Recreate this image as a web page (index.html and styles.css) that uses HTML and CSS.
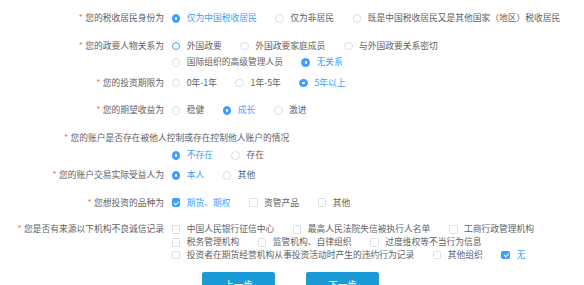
FILE: index.html
```html
<!DOCTYPE html>
<html lang="zh-CN">
<head>
<meta charset="utf-8">
<title>投资者信息</title>
<link rel="stylesheet" href="styles.css">
</head>
<body>
<div class="form">
  <div class="row">
    <div class="label"><span class="req">*</span>您的税收居民身份为</div>
    <div class="opts">
      <span class="opt on"><i class="radio"></i>仅为中国税收居民</span>
      <span class="opt"><i class="radio"></i>仅为非居民</span>
      <span class="opt"><i class="radio"></i>既是中国税收居民又是其他国家（地区）税收居民</span>
    </div>
  </div>

  <div class="row">
    <div class="label"><span class="req">*</span>您的政要人物关系为</div>
    <div class="opts wrap">
      <span class="opt hover"><i class="radio"></i>外国政要</span>
      <span class="opt"><i class="radio"></i>外国政要家庭成员</span>
      <span class="opt"><i class="radio"></i>与外国政要关系密切</span>
      <span class="opt"><i class="radio"></i>国际组织的高级管理人员</span>
      <span class="opt on"><i class="radio"></i>无关系</span>
    </div>
  </div>

  <div class="row close">
    <div class="label"><span class="req">*</span>您的投资期限为</div>
    <div class="opts">
      <span class="opt"><i class="radio"></i>0年-1年</span>
      <span class="opt"><i class="radio"></i>1年-5年</span>
      <span class="opt on"><i class="radio"></i>5年以上</span>
    </div>
  </div>

  <div class="row">
    <div class="label"><span class="req">*</span>您的期望收益为</div>
    <div class="opts">
      <span class="opt"><i class="radio"></i>稳健</span>
      <span class="opt on"><i class="radio"></i>成长</span>
      <span class="opt"><i class="radio"></i>激进</span>
    </div>
  </div>

  <div class="long-label"><span class="req">*</span>您的账户是否存在被他人控制或存在控制他人账户的情况</div>
  <div class="row under">
    <div class="label"></div>
    <div class="opts">
      <span class="opt on"><i class="radio"></i>不存在</span>
      <span class="opt"><i class="radio"></i>存在</span>
    </div>
  </div>

  <div class="row close">
    <div class="label"><span class="req">*</span>您的账户交易实际受益人为</div>
    <div class="opts">
      <span class="opt on"><i class="radio"></i>本人</span>
      <span class="opt"><i class="radio"></i>其他</span>
    </div>
  </div>

  <div class="row">
    <div class="label"><span class="req">*</span>您想投资的品种为</div>
    <div class="opts">
      <span class="opt on"><i class="check"></i>期货、期权</span>
      <span class="opt"><i class="check"></i>资管产品</span>
      <span class="opt"><i class="check"></i>其他</span>
    </div>
  </div>

  <div class="row dense">
    <div class="label"><span class="req">*</span>您是否有来源以下机构不良诚信记录</div>
    <div class="opts wrap">
      <span class="opt"><i class="check"></i>中国人民银行征信中心</span>
      <span class="opt"><i class="check"></i>最高人民法院失信被执行人名单</span>
      <span class="opt"><i class="check"></i>工商行政管理机构</span>
      <span class="opt"><i class="check"></i>税务管理机构</span>
      <span class="opt"><i class="check"></i>监管机构、自律组织</span>
      <span class="opt"><i class="check"></i>过度维权等不当行为信息</span>
      <span class="opt"><i class="check"></i>投资者在期货经营机构从事投资活动时产生的违约行为记录</span>
      <span class="opt"><i class="check"></i>其他组织</span>
      <span class="opt on"><i class="check"></i>无</span>
    </div>
  </div>

  <div class="actions">
    <button class="btn" type="button">上一步</button>
    <button class="btn" type="button">下一步</button>
  </div>
</div>
</body>
</html>
```

FILE: styles.css
```css
html, body {
  margin: 0;
  padding: 0;
  background: #ffffff;
  overflow: hidden;
}

body {
  font-family: "Noto Sans CJK SC", "Noto Sans", sans-serif;
  font-size: 8.75px;
  color: #606266;
}

.form {
  padding-top: 10.3px;
}

.row {
  display: grid;
  grid-template-columns: 171.6px 1fr;
  line-height: 16px;
  margin-top: 11.4px;
}

.row:first-child {
  margin-top: 0;
}

.row.close {
  margin-top: 4px;
}

.row.under {
  margin-top: 1.4px;
}

.row.dense {
  line-height: 12.7px;
  margin-top: 12.6px;
}

.label {
  text-align: right;
  padding-right: 7.6px;
  white-space: nowrap;
}

.req {
  color: #f56c6c;
  margin-right: 2.5px;
}

.long-label {
  line-height: 16px;
  margin-top: 11.6px;
  padding-left: 64px;
  white-space: nowrap;
}

.opts {
  display: flex;
  flex-wrap: wrap;
  align-items: center;
}

.opts.wrap .opt {
  line-height: inherit;
}

.row:not(.dense) .opts.wrap {
  line-height: 16.6px;
}

.opt {
  display: inline-flex;
  align-items: center;
  margin-right: 18.6px;
  white-space: nowrap;
}

.opt.on {
  color: #409eff;
}

.radio,
.check {
  display: inline-block;
  box-sizing: border-box;
  width: 8.75px;
  height: 8.75px;
  border: 1px solid #dcdfe6;
  background: #ffffff;
  margin-right: 6.3px;
  position: relative;
  flex: none;
}

.radio {
  border-radius: 50%;
}

.check {
  border-radius: 1.5px;
}

.opt.hover .radio {
  border-color: #409eff;
}

.opt.on .radio,
.opt.on .check {
  background: #409eff;
  border-color: #409eff;
}

.opt.on .radio::after {
  content: "";
  position: absolute;
  left: 50%;
  top: 50%;
  width: 2.6px;
  height: 2.6px;
  margin: -1.3px 0 0 -1.3px;
  border-radius: 50%;
  background: #ffffff;
}

.opt.on .check::after {
  content: "";
  position: absolute;
  left: 2.4px;
  top: 0.6px;
  width: 1.8px;
  height: 4px;
  border: solid #ffffff;
  border-width: 0 1px 1px 0;
  transform: rotate(45deg);
}

.actions {
  display: flex;
  justify-content: center;
  gap: 30.7px;
  margin-top: 10.2px;
  padding-right: 3px;
}

.btn {
  width: 73.4px;
  height: 25px;
  padding: 0;
  border: 1px solid #1a9ad6;
  border-radius: 2px;
  background: #1a9ad6;
  color: #ffffff;
  font-family: inherit;
  font-size: 9.5px;
  line-height: 23px;
}
```
